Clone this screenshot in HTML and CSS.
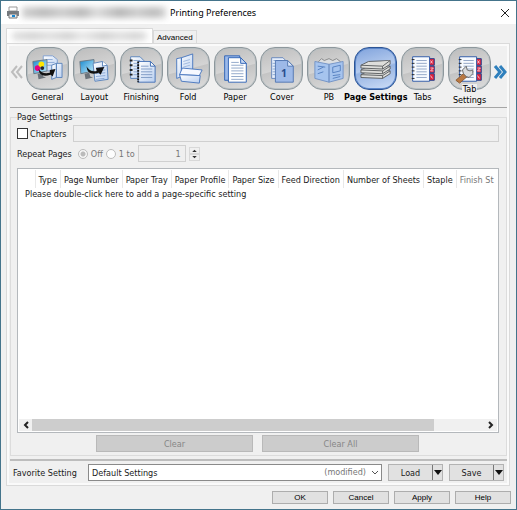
FILE: index.html
```html
<!DOCTYPE html>
<html lang="en">
<head>
<meta charset="utf-8">
<title>Printing Preferences</title>
<link rel="stylesheet" href="styles.css">
</head>
<body>
<svg class="defs" aria-hidden="true">
  <defs>
    <linearGradient id="sheet" x1="0" y1="0" x2="1" y2="1"><stop offset="0" stop-color="#fff"/><stop offset="1" stop-color="#b9cff0"/></linearGradient>
    <linearGradient id="screen" x1="0" y1="0" x2="1" y2="1"><stop offset="0" stop-color="#1688cf"/><stop offset="1" stop-color="#c5edfb"/></linearGradient>
    <g id="monitor">
      <path d="M3 9 18 7v12L4 22z" fill="url(#screen)" stroke="#6a7883"/>
      <path d="M8 22l5-1 1 4 3 1-8 2z" fill="#6b7279"/>
    </g>
    <g id="tabbook">
      <path d="M24 6h6v7h-6zM24 14h6v7h-6zM24 22h6v7h-6z" fill="#e4243c" stroke="#1d3c8c"/>
      <path d="M26 8l2 3M26 11l2-3M26 16h3l-3 3h3M26 24l2 3" stroke="#f5c8d4"/>
      <path d="M7 4h18v26H7z" fill="#f8fbff" stroke="#2c57a6"/>
      <path d="M11 8h11M11 11h11M11 14h11M11 17h11M11 20h11M11 23h11M11 26h11" stroke="#8fa3c4"/>
      <path d="M6 7h3M6 11h3M6 15h3M6 19h3M6 23h3M6 27h3" stroke="#222"/>
    </g>
  </defs>
</svg>
<div class="window">
  <header class="titlebar">
    <svg class="printer" viewBox="0 0 14 14" aria-hidden="true">
      <path d="M3 1h8v4H3z" fill="#fff" stroke="#999"/>
      <path d="M1 5h12v5H1z" fill="#74797e"/>
      <path d="M3 8h8v4H3z" fill="#e8edf2" stroke="#777"/>
      <path d="M6 9h3v2H6z" fill="#1686d0"/>
    </svg>
    <span class="redacted redacted-title"></span>
    <h1>Printing Preferences</h1>
    <button class="close" type="button" aria-label="Close"><svg viewBox="0 0 10 10"><path d="M1 1l8 8M9 1 1 9" stroke="#222" fill="none"/></svg></button>
  </header>

  <div class="tabs">
    <button class="tab tab-on" type="button" aria-label="Printer"><span class="redacted redacted-tab"></span></button>
    <button class="tab" type="button">Advanced</button>
  </div>

  <main class="sheet">
    <nav class="pages">
      <button class="arrow arrow-off" type="button" aria-label="Previous"><svg viewBox="0 0 14 14"><path d="M7 1 2 7l5 6M12 1 7 7l5 6"/></svg></button>
      <div class="page-list">
        <button class="page" type="button"><span class="tile"><svg viewBox="0 0 36 34">
          <path d="M14 3h10l5 4v12H14z" fill="url(#sheet)" stroke="#7f9ecf"/><path d="M17 7h7M17 10h9M17 13h9" stroke="#88a6d4"/>
          <use href="#monitor"/>
          <circle cx="8" cy="16" r="3" fill="#e6007e"/><circle cx="12" cy="12" r="3" fill="#ffe600"/><circle cx="13" cy="16" r="2" fill="#22262c"/>
          <path d="M23 13l5-2v15l-5 2zM28 11h6v15h-6z" fill="url(#sheet)" stroke="#5a83bb"/>
          <path d="M9 17q4 6 12 4v-3l6-1-3 8-2-2Q10 27 9 17z" fill="#111"/>
        </svg></span><span class="caption">General</span></button>
        <button class="page" type="button"><span class="tile"><svg viewBox="0 0 36 34">
          <use href="#monitor"/>
          <path d="M17 11l10-2 5 4 1 15-14 2z" fill="url(#sheet)" stroke="#5a83bb"/><path d="M20 16l9-1M20 19l10-1M20 22l10-1M20 25l10-1M20 28l9-1" stroke="#88a6d4"/>
          <path d="M27 9v5l5-1" fill="#fff" stroke="#5a83bb"/>
          <path d="M10 14q4 7 11 5l-1-3 9-1-4 8-2-2Q11 25 10 14z" fill="#111"/>
        </svg></span><span class="caption">Layout</span></button>
        <button class="page" type="button"><span class="tile"><svg viewBox="0 0 36 34">
          <path d="M7 4h10l4 4v19H7z" fill="url(#sheet)" stroke="#5a83bb"/><path d="M10 8h7M10 11h7M10 14h7M10 17h7M10 20h7M10 23h7" stroke="#8ba7d0"/>
          <path d="M6 8h3M6 13h3M6 18h3M6 23h3" stroke="#222" stroke-width="2"/>
          <path d="M15 9h13l5 5v17H15z" fill="url(#sheet)" stroke="#4571b6"/><path d="M28 9v5h5z" fill="#fff" stroke="#3c69b0"/><path d="M18 14h8M18 17h12M18 20h12M18 23h12M18 26h12" stroke="#7f9bc5"/>
          <path d="M15 9v22" stroke="#111" stroke-width="2" stroke-dasharray="2 1"/>
        </svg></span><span class="caption">Finishing</span></button>
        <button class="page" type="button"><span class="tile"><svg viewBox="0 0 36 34">
          <path d="M6 6l5-1v20l-5 2zM11 5l12-4v20l-12 6z" fill="url(#sheet)" stroke="#4a78bf"/><path d="M13 9l7-2M13 12l7-2M13 15l7-2" stroke="#9db7de"/>
          <path d="M12 16l21 2-3 6-21-1z" fill="#f6f9ff" stroke="#4a78bf"/><path d="M9 23l22 1-1 8-19-2z" fill="url(#sheet)" stroke="#4a78bf"/>
        </svg></span><span class="caption">Fold</span></button>
        <button class="page" type="button"><span class="tile"><svg viewBox="0 0 36 34">
          <path d="M7 3h16v26H7z" fill="#9bb9ea" stroke="#2f62b4"/>
          <path d="M11 5h13l6 6v20H11z" fill="#fff" stroke="#2f62b4"/><path d="M24 5v6h6z" fill="#cadbf5" stroke="#2f62b4"/>
          <path d="M14 10h8M14 13h13M14 16h13M14 19h13M14 22h13M14 25h13M14 28h13" stroke="#8fa5c8"/>
        </svg></span><span class="caption">Paper</span></button>
        <button class="page" type="button"><span class="tile"><svg viewBox="0 0 36 34">
          <path d="M7 5h12l3 3v19H7z" fill="#e6eefb" stroke="#6685bb"/><path d="M9 8h9M8 11h4M8 14h4M8 17h4M8 20h4M8 23h4" stroke="#8ba7d0"/>
          <path d="M11 8h13l6 6v17H11z" fill="#9db9e8" stroke="#5376b1"/><path d="M24 8v6h6z" fill="#dbe7fa" stroke="#5376b1"/>
          <text x="20" y="25" class="cover-digit">1</text>
        </svg></span><span class="caption">Cover</span></button>
        <button class="page" type="button"><span class="tile"><svg viewBox="0 0 36 34">
          <path d="M7 9l3-3 3 2 5-2 4 2 4-2 4 3v4H7z" fill="#dcdfe2" stroke="#888"/>
          <path d="M3 9l15 3v19L3 27zM18 12l15-3v18l-15 4z" fill="#a6c4ee" stroke="#7393c5"/>
          <path d="M6 14l8 1M6 18l6-3M6 22l6-2M22 24l8-1M22 27l8-2" stroke="#5580c0"/><path d="M22 15l8-2v6l-8 2z" stroke="#5580c0"/>
        </svg></span><span class="caption">PB</span></button>
        <button class="page page-on" type="button" aria-current="page"><span class="tile"><svg viewBox="0 0 36 34">
          <g fill="#dededb" stroke="#5b5e60">
            <path d="M2 23l8-4h23v3l-8 5-23-1z"/><path d="M2 23l23 1 8-5M25 24v3"/>
            <path d="M2 18l8-4h23v3l-8 5-23-1z"/><path d="M2 18l23 1 8-5M25 19v3"/>
            <path d="M2 13l8-4 23-1v4l-8 5-23-1z"/><path d="M2 13l23 1 8-6M25 14v3"/>
          </g>
        </svg></span><span class="caption">Page Settings</span></button>
        <button class="page" type="button"><span class="tile"><svg viewBox="0 0 36 34"><use href="#tabbook"/></svg></span><span class="caption">Tabs</span></button>
        <button class="page" type="button"><span class="tile"><svg viewBox="0 0 36 34"><use href="#tabbook"/>
          <path d="M3 29l8-7 4 3-8 7z" fill="#b97842" stroke="#8a5a32"/><path d="M11 22l-1-4 4-4 1 4 3 1 3-1v4l-4 4-3-1z" fill="#d8dadc" stroke="#666"/>
        </svg></span><span class="caption caption-two"><span>Tab</span><span>Settings</span></span></button>
      </div>
      <button class="arrow" type="button" aria-label="Next"><svg viewBox="0 0 14 14"><path d="M2 1l5 6-5 6M7 1l5 6-5 6"/></svg></button>
    </nav>

    <fieldset class="group">
      <legend>Page Settings</legend>
      <div class="row">
        <input type="checkbox" id="chapters"><label for="chapters">Chapters</label>
        <input class="chapters-text" type="text" aria-label="Chapter pages" disabled>
      </div>
      <div class="row row-repeat">
        <span class="repeat-name">Repeat Pages</span>
        <input type="radio" name="repeat" id="off" checked disabled><label class="dim" for="off">Off</label>
        <input type="radio" name="repeat" id="to" disabled><label class="dim" for="to">1 to</label>
        <input class="count" type="text" value="1" aria-label="Repeat to page" disabled>
        <span class="spin">
          <button type="button" aria-label="Increase"><svg viewBox="0 0 6 4"><path d="M0 4l3-3 3 3z"/></svg></button>
          <button type="button" aria-label="Decrease"><svg viewBox="0 0 6 4"><path d="M0 0l3 3 3-3z"/></svg></button>
        </span>
      </div>
      <div class="list">
        <div class="list-view">
          <table>
            <thead><tr><th class="blank"></th><th>Type</th><th>Page Number</th><th>Paper Tray</th><th>Paper Profile</th><th>Paper Size</th><th>Feed Direction</th><th>Number of Sheets</th><th>Staple</th><th class="dim">Finish St</th></tr></thead>
            <tbody><tr><td colspan="10">Please double-click here to add a page-specific setting</td></tr></tbody>
          </table>
        </div>
        <div class="scroll">
          <button type="button" aria-label="Scroll left"><svg viewBox="0 0 6 8"><path d="M5 1 2 4l3 3"/></svg></button>
          <div class="track"><div class="thumb"></div></div>
          <button type="button" aria-label="Scroll right"><svg viewBox="0 0 6 8"><path d="M1 1l3 3-3 3"/></svg></button>
        </div>
      </div>
      <div class="clears">
        <button type="button" disabled>Clear</button>
        <button type="button" disabled>Clear All</button>
      </div>
    </fieldset>

    <div class="favorite">
      <label for="favorite">Favorite Setting</label>
      <div class="combo">
        <select id="favorite"><option>Default Settings</option></select>
        <span class="modified">(modified)</span>
        <svg class="chevron" viewBox="0 0 8 6"><path d="M1 1l3 3 3-3"/></svg>
      </div>
      <div class="split"><button type="button">Load</button><button class="drop" type="button" aria-label="Load options"><svg viewBox="0 0 8 5"><path d="M0 0h8L4 5z"/></svg></button></div>
      <div class="split"><button type="button">Save</button><button class="drop" type="button" aria-label="Save options"><svg viewBox="0 0 8 5"><path d="M0 0h8L4 5z"/></svg></button></div>
    </div>
  </main>

  <footer>
    <button type="button">OK</button>
    <button type="button">Cancel</button>
    <button type="button">Apply</button>
    <button type="button">Help</button>
  </footer>
</div>
</body>
</html>
```
FILE: styles.css
```css
* { box-sizing: border-box; }

body {
  margin: 0;
  font: 9px/12px "DejaVu Sans Condensed", "Noto Sans", sans-serif;
  color: #1a1a1a;
}

button, input, select { font: inherit; color: inherit; margin: 0; padding: 0; }
button { border: 0; background: none; }
svg { display: block; }
.defs { position: absolute; width: 0; height: 0; }
.dim { color: #777; }

.window {
  min-height: 100vh;
  display: flex;
  flex-direction: column;
  background: #f0f0f0;
  border: 1px solid #44748b;
}

.titlebar {
  display: flex;
  align-items: center;
  height: 23px;
  padding: 0 6px 0 5px;
  background: #fff;
}
.printer { width: 14px; height: 14px; }
.titlebar h1 { margin: 0; font: 400 9px/12px "Noto Sans", sans-serif; flex: 1; color: #000; }
.close svg { width: 10px; height: 10px; }

.redacted {
  background: linear-gradient(90deg, #d0d0d0, #bbb 15%, #cecece 28%, #b8b8b8 42%, #dcdcdc 52%, #b6b6b6 68%, #cecece 80%, #bbb 92%, #d4d4d4);
  filter: blur(3px);
}
.redacted-title { width: 144px; height: 11px; margin: 0 4px 0 2px; }
.redacted-tab { width: 135px; height: 8px; opacity: .7; }

.tabs { display: flex; align-items: flex-end; padding: 4px 5px 0; }
.tab {
  height: 13px;
  padding: 0 3px;
  border: 1px solid #dadada;
  border-bottom: 0;
  font: 8px/11px "Liberation Sans", sans-serif;
  color: #000;
}
.tab-on { display: flex; align-items: center; height: 15px; padding: 0 5px; background: #fff; }

.sheet {
  flex: 1;
  display: flex;
  flex-direction: column;
  margin: 0 6px 0 5px;
  border: 1px solid #dadada;
  outline: 2px solid #fafafa;
  outline-offset: -3px;
  padding: 3px 2px 2px 3px;
}

.pages { display: flex; border-bottom: 1px solid #a6a6a6; height: 61px; }
.arrow { flex: 0 0 13px; height: 46px; padding-top: 4px; }
.arrow svg { width: 14px; height: 16px; fill: none; stroke: #2f80bd; stroke-width: 3; }
.arrow-off svg { stroke: #bdbdbd; stroke-width: 2; }
.page-list { flex: 1; display: grid; grid-template-columns: repeat(10, minmax(0, 1fr)); }
.page { display: flex; flex-direction: column; align-items: center; justify-content: flex-start; }
.tile {
  display: flex;
  align-items: center;
  justify-content: center;
  flex: none;
  width: 43px;
  height: 43px;
  border: 1px solid #8d979c;
  border-radius: 15px;
  background: linear-gradient(165deg, #bcbcbc 0%, #d4d4d4 50%, #c4c4c4 52%, #dedede 100%);
  box-shadow: inset 0 0 0 1px #b8bfc2;
}
.tile svg { width: 34px; height: 32px; fill: none; }
.cover-digit { font: bold 11px "Noto Sans", sans-serif; fill: #294d8e; text-anchor: middle; }
.caption { white-space: nowrap; line-height: 14px; color: #000; }
.caption-two { display: flex; flex-direction: column; align-items: center; line-height: 11px; margin-top: -6px; }
.caption-two span { background: #f0f0f0; padding: 0 1px; }
.page-on .tile {
  border-color: #2c5495;
  background: linear-gradient(165deg, #7fa2dc 0%, #b5cbee 48%, #97b4e2 52%, #cfdff8 100%);
  box-shadow: inset 0 0 0 1px #5b86c9;
}
.page-on .caption { font-weight: 700; }

.group {
  flex: 1;
  min-width: 0;
  margin: 3px 0 0;
  padding: 1px 7px 3px 6px;
  border: 1px solid #dcdcdc;
}
.group legend { padding: 0; line-height: 13px; }

.row { display: flex; align-items: center; height: 17px; }
input[type="checkbox"] {
  appearance: none;
  width: 11px;
  height: 11px;
  margin-right: 2px;
  border: 1px solid #333;
  background: #fff;
}
input[type="text"] {
  height: 17px;
  border: 1px solid #d0d0d0;
  background: #efefef;
}
.row label { white-space: nowrap; }
.chapters-text { flex: 1; min-width: 0; margin-left: 6px; }

.row-repeat { margin: 3px 0 6px; gap: 3px; }
.repeat-name { margin-right: 3px; }
input[type="radio"] {
  appearance: none;
  width: 10px;
  height: 10px;
  border: 1px solid #bcbcbc;
  border-radius: 50%;
  background: #fdfdfd;
}
input[type="radio"]:checked { background: radial-gradient(circle, #bbb 0 2px, #f7f7f7 3px); }
.count { width: 48px; padding-right: 4px; text-align: right; color: #777; }
.spin { display: flex; flex-direction: column; }
.spin button { width: 11px; height: 7px; border: 1px solid #d8d8d8; display: grid; place-items: center; }
.spin svg { width: 5px; height: 3px; fill: #333; }

.list {
  border: 1px solid #b4b8bc;
  background: #fff;
  padding: 1px;
}
.list-view { min-height: 249px; overflow: hidden; }
table { width: 100%; border-collapse: collapse; }
th, td { padding: 0; font-weight: 400; text-align: left; white-space: nowrap; }
th { height: 18px; padding: 2px 3px 0; border-right: 1px solid #e8e8e8; }
th.blank { min-width: 16px; }
th:last-child { width: 100%; border-right: 0; padding-right: 0; }
td { padding: 0 6px; }

.scroll { display: flex; height: 12px; background: #f0f0f0; }
.scroll button { width: 13px; display: grid; place-items: center; }
.scroll svg { width: 6px; height: 8px; fill: none; stroke: #222; stroke-width: 2; }
.track { flex: 1; }
.thumb { width: 89%; height: 12px; background: #cdcdcd; }

.clears { display: grid; grid-template-columns: 1fr 1fr; gap: 9px; margin-top: 2px; padding: 0 80px 0 79px; }
.clears button { height: 17px; border: 1px solid #b9b9b9; background: #ccc; color: #868686; }

.favorite {
  display: flex;
  align-items: center;
  gap: 6px;
  margin-top: 3px;
  padding: 3px 3px 2px;
  border-top: 2px solid #bdbdbd;
}
.favorite label { width: 69px; white-space: nowrap; }
.combo { flex: 1; position: relative; }
.combo select {
  display: block;
  appearance: none;
  width: 100%;
  height: 17px;
  padding: 0 3px;
  border: 1px solid #8a8a8a;
  border-radius: 0;
  background: #fff;
}
.modified { position: absolute; right: 16px; top: 2px; color: #777; pointer-events: none; }
.chevron { position: absolute; right: 3px; top: 6px; width: 8px; height: 6px; fill: none; stroke: #555; pointer-events: none; }
.split { display: flex; width: 55px; height: 17px; border: 1px solid #b3b3b3; background: #e1e1e1; }
.split button { flex: 1; }
.split .drop { flex: 0 0 10px; border-left: 1px solid #777; display: grid; place-items: center; }
.drop svg { width: 8px; height: 5px; fill: #111; }

footer { display: flex; justify-content: flex-end; gap: 5px; padding: 5px; }
footer button {
  width: 56px;
  height: 13px;
  border: 1px solid #adadad;
  background: #e1e1e1;
  font: 8px/11px "Liberation Sans", sans-serif;
  color: #000;
}
```
